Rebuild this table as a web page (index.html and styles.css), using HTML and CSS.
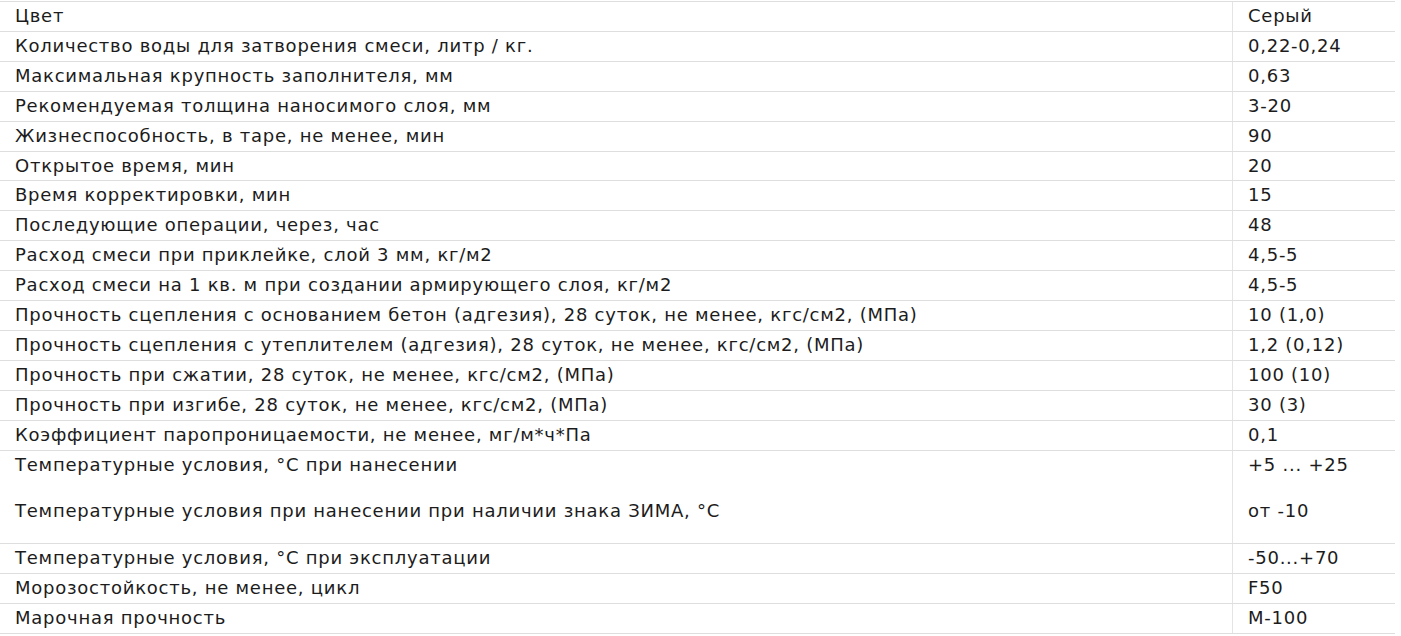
FILE: index.html
```html
<!DOCTYPE html>
<html lang="ru">
<head>
<meta charset="utf-8">
<title>Характеристики</title>
<link rel="stylesheet" href="styles.css">
</head>
<body>
<table class="specs">
<tbody>
<tr><td class="name">Цвет</td><td class="val">Серый</td></tr>
<tr><td class="name">Количество воды для затворения смеси, литр / кг.</td><td class="val">0,22-0,24</td></tr>
<tr><td class="name">Максимальная крупность заполнителя, мм</td><td class="val">0,63</td></tr>
<tr><td class="name">Рекомендуемая толщина наносимого слоя, мм</td><td class="val">3-20</td></tr>
<tr><td class="name">Жизнеспособность, в таре, не менее, мин</td><td class="val">90</td></tr>
<tr><td class="name">Открытое время, мин</td><td class="val">20</td></tr>
<tr><td class="name">Время корректировки, мин</td><td class="val">15</td></tr>
<tr><td class="name">Последующие операции, через, час</td><td class="val">48</td></tr>
<tr><td class="name">Расход смеси при приклейке, слой 3 мм, кг/м2</td><td class="val">4,5-5</td></tr>
<tr><td class="name">Расход смеси на 1 кв. м при создании армирующего слоя, кг/м2</td><td class="val">4,5-5</td></tr>
<tr><td class="name">Прочность сцепления с основанием бетон (адгезия), 28 суток, не менее, кгс/см2, (МПа)</td><td class="val">10 (1,0)</td></tr>
<tr><td class="name">Прочность сцепления с утеплителем (адгезия), 28 суток, не менее, кгс/см2, (МПа)</td><td class="val">1,2 (0,12)</td></tr>
<tr><td class="name">Прочность при сжатии, 28 суток, не менее, кгс/см2, (МПа)</td><td class="val">100 (10)</td></tr>
<tr><td class="name">Прочность при изгибе, 28 суток, не менее, кгс/см2, (МПа)</td><td class="val">30 (3)</td></tr>
<tr><td class="name">Коэффициент паропроницаемости, не менее, мг/м*ч*Па</td><td class="val">0,1</td></tr>
<tr>
<td class="name">Температурные условия, °С при нанесении<p class="extra">Температурные условия при нанесении при наличии знака ЗИМА, °С</p></td>
<td class="val">+5 ... +25<p class="extra">от -10</p></td>
</tr>
<tr><td class="name">Температурные условия, °С при эксплуатации</td><td class="val">-50...+70</td></tr>
<tr><td class="name">Морозостойкость, не менее, цикл</td><td class="val">F50</td></tr>
<tr><td class="name">Марочная прочность</td><td class="val">М-100</td></tr>
</tbody>
</table>
</body>
</html>
```
FILE: styles.css
```css
html, body {
  margin: 0;
  padding: 0;
  background: #ffffff;
}

.specs {
  width: 1395px;
  border-collapse: collapse;
  font-family: "DejaVu Sans", "Noto Sans", sans-serif;
  font-size: 18px;
  letter-spacing: 0.75px;
  color: #1c1c1c;
  margin-top: 1px;
}

.specs td {
  padding: 4px 15px;
  line-height: 20.9px;
  border-top: 1px solid #dedede;
  border-bottom: 1px solid #dedede;
  vertical-align: top;
}

.specs .name {
  width: 1202px;
}

.specs .val {
  border-left: 1px solid #e4e4e4;
}

.extra {
  margin: 25px 0 18px;
}
```
